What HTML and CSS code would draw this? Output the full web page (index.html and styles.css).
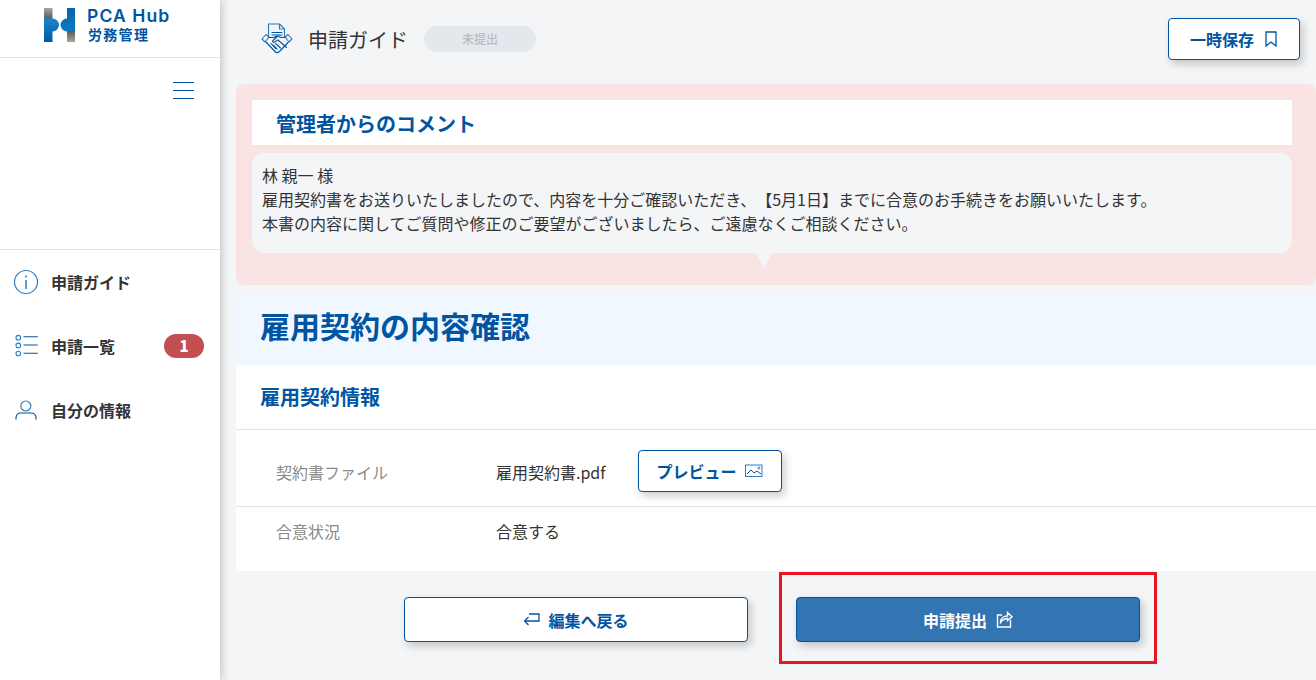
FILE: index.html
```html
<!DOCTYPE html>
<html lang="ja">
<head>
<meta charset="utf-8">
<title>申請ガイド</title>
<link rel="stylesheet" href="styles.css">
</head>
<body>
<div class="app">
  <aside class="sidebar">
    <div class="brand">
      <svg class="brand-mark" width="31" height="34" viewBox="0 0 31 34">
        <defs>
          <linearGradient id="g1" x1="0" y1="0" x2="0" y2="34" gradientUnits="userSpaceOnUse"><stop offset="0" stop-color="#aaa69e"/><stop offset=".3" stop-color="#5f5d58"/><stop offset=".31" stop-color="#1a86c4"/><stop offset="1" stop-color="#0058a6"/></linearGradient>
          <linearGradient id="g2" x1="0" y1="0" x2="0" y2="34" gradientUnits="userSpaceOnUse"><stop offset="0" stop-color="#0a62ad"/><stop offset=".68" stop-color="#0a7cc0"/><stop offset=".69" stop-color="#5f5d58"/><stop offset="1" stop-color="#aaa69e"/></linearGradient>
        </defs>
        <path d="M0 0h8.500v10.500a6.500 6.500 0 0 1 0 13V34H0z" fill="url(#g1)"/>
        <path d="M23 0h8v34h-8V23.500a6.500 6.500 0 0 1 0-13z" fill="url(#g2)"/>
      </svg>
      <div class="brand-text">
        <span class="brand-name">PCA Hub</span>
        <span class="brand-sub">労務管理</span>
      </div>
    </div>
    <div class="menu-row">
      <button class="burger" aria-label="メニュー"><i></i><i></i><i></i></button>
    </div>
    <nav class="nav">
      <a class="nav-item">
        <svg width="26" height="26" viewBox="0 0 26 26" fill="none" stroke="#2f7fc1" stroke-width="1.200"><circle cx="13" cy="13" r="11.500"/><path d="M13 11v9M13 6.500v2" stroke="#0055a2"/></svg>
        <span>申請ガイド</span>
      </a>
      <a class="nav-item">
        <svg width="26" height="26" viewBox="0 0 26 26" fill="none" stroke="#0055a2" stroke-width="1.100"><circle cx="5.300" cy="4.700" r="2.300" stroke="#2f7fc1"/><circle cx="5.300" cy="12.400" r="2.300" stroke="#2f7fc1"/><circle cx="5.300" cy="20.500" r="2.300" stroke="#2f7fc1"/><path d="M10.500 3.800h14.200M10.500 12h14.200M10.500 20.300h14.200"/></svg>
        <span>申請一覧</span>
        <b class="badge">1</b>
      </a>
      <a class="nav-item">
        <svg width="26" height="26" viewBox="0 0 26 26" fill="none" stroke="#2f7fc1" stroke-width="1.200"><circle cx="12.800" cy="9" r="5"/><path d="M3 22.500V21c0-3 2-5 5-5h10c3 0 5 2 5 5v1.500" stroke="#0055a2"/></svg>
        <span>自分の情報</span>
      </a>
    </nav>
  </aside>
  <main class="main">
    <header class="topbar">
      <svg class="guide-icon" width="32" height="32" viewBox="0 0 32 32" fill="none" stroke="#2a78bd" stroke-width="1.100" stroke-linejoin="round" stroke-linecap="round">
        <path d="M7.500 15V2h11l5 5v8"/><path d="M18.500 2v5h5"/>
        <path d="M11 10.500h10M11 13h10" stroke="#0055a2"/>
        <path d="M1 17l4-4.500 3 2.500-4 5zM31 17l-4-4.500-3 2.500 4 5z"/>
        <path d="M5 20l9 9.500c1.500 1.500 3.500 1 4.500 0l8.500-9" stroke="#0055a2"/>
        <path d="M8 15.500h5l3-1.500M24 15.500h-4l-3-1.500-5 4.500c-1 1 0 2.500 1.500 1.500l3.500-2 8.500 7.500M12 23l4 4M14.500 21.500l5 4.500M10 21.500l4.500 5" stroke="#0055a2"/>
      </svg>
      <h1 class="page-title">申請ガイド</h1>
      <span class="status">未提出</span>
      <button class="btn save">一時保存
        <svg class="save-icon" width="12" height="16" viewBox="0 0 12 16" fill="none" stroke="#0055a2" stroke-width="1.300"><path d="M1 1h10v14l-5-4-5 4z"/></svg>
      </button>
    </header>
    <section class="comment">
      <h2 class="comment-title">管理者からのコメント</h2>
      <div class="bubble">
        <p>林 親一 様</p>
        <p>雇用契約書をお送りいたしましたので、内容を十分ご確認いただき、【5月1日】までに合意のお手続きをお願いいたします。</p>
        <p>本書の内容に関してご質問や修正のご要望がございましたら、ご遠慮なくご相談ください。</p>
      </div>
    </section>
    <section class="heading"><h2>雇用契約の内容確認</h2></section>
    <section class="card">
      <h3 class="card-title">雇用契約情報</h3>
      <div class="row row-file">
        <div class="label">契約書ファイル</div>
        <div class="value">雇用契約書.pdf</div>
        <button class="btn preview">プレビュー
          <svg width="18" height="14" viewBox="0 0 18 14" fill="none" stroke="#2f7fc1" stroke-width="1"><rect x=".5" y="1" width="16.500" height="11.500"/><path d="M2 10l4-4 3 3 3-2 4 3" stroke="#0055a2"/><circle cx="14" cy="4" r="1"/></svg>
        </button>
      </div>
      <div class="row row-agree">
        <div class="label">合意状況</div>
        <div class="value">合意する</div>
      </div>
    </section>
    <div class="actions">
      <button class="btn back">
        <svg width="17" height="14" viewBox="0 0 17 14" fill="none" stroke="#0055a2" stroke-width="1.300"><path d="M6 1h10v7H1.500M5.500 4L1.500 8l4 4"/></svg>
        編集へ戻る
      </button>
      <div class="highlight">
        <button class="btn submit">申請提出
          <svg width="17" height="17" viewBox="0 0 17 17" fill="none" stroke="#fff" stroke-width="1.400"><path d="M6 4H1.500v12h13V9"/><path d="M4.500 11.500c0-4 3-6.500 7-6.500V1.500L16 5.800l-4.500 3.700V7.500c-3 0-5 1.300-7 4z"/></svg>
        </button>
      </div>
    </div>
  </main>
</div>
</body>
</html>
```
FILE: styles.css
```css
* { box-sizing: border-box; }
html, body { margin: 0; height: 680px; overflow: hidden; }
body {
  background: #f4f5f7;
  color: #333;
  font-family: "Noto Sans CJK JP", "Noto Sans", sans-serif;
  font-size: 16px;
  text-spacing-trim: space-all;
}
h1, h2, h3, p { margin: 0; font-weight: inherit; }
button { font-family: inherit; cursor: pointer; }

.app { display: flex; height: 680px; }

/* Sidebar */
.sidebar {
  width: 220px;
  flex: none;
  background: #fff;
  box-shadow: 2px 0 8px rgba(0, 0, 0, .2);
  position: relative;
}
.brand {
  height: 58px;
  border-bottom: 1px solid #e3e3e3;
  display: flex;
  padding: 8px 0 0 44px;
  gap: 12px;
}
.brand-text { display: flex; flex-direction: column; color: #0055a2; margin-top: -2px; }
.brand-name { font: 600 17.500px/20px "Inter", sans-serif; letter-spacing: 1.100px; }
.brand-sub { font-size: 14px; line-height: 16px; font-weight: 700; letter-spacing: 1.300px; padding-left: 1px; }
.menu-row {
  height: 192px;
  border-bottom: 1px solid #e3e3e3;
  display: flex;
  justify-content: flex-end;
  padding: 24px 26px 0 0;
}
.burger {
  width: 21px; height: 17px; padding: 0; border: 0; background: none;
  display: flex; flex-direction: column; justify-content: space-between;
}
.burger i { display: block; height: 1px; background: #0055a2; }
.nav-item {
  height: 64px;
  display: flex;
  align-items: center;
  gap: 12px;
  padding: 0 16px 0 13px;
  font-size: 16px;
  font-weight: 700;
  line-height: 22px;
  color: #333;
}
.badge {
  margin-left: auto;
  width: 40px; height: 24px;
  border-radius: 12px;
  background: #c44f52;
  color: #fff;
  font-size: 15px;
  line-height: 24px;
  text-align: center;
}

/* Main */
.main { flex: 1; min-width: 0; padding-left: 16px; }
.topbar {
  height: 84px;
  display: flex;
  align-items: flex-start;
  padding: 18px 16px 0 24px;
}
.guide-icon { margin-top: 4px; margin-left: 1px; }
.page-title { font-size: 20px; line-height: 44px; margin-left: 15px; color: #333; }
.status {
  width: 112px; height: 26px;
  margin: 8px 0 0 16px;
  border-radius: 13px;
  background: #e4e7ec;
  color: #bbb;
  font-size: 12px;
  font-weight: 500;
  line-height: 26px;
  text-align: center;
}
.btn {
  display: inline-flex;
  align-items: center;
  justify-content: center;
  border: 1px solid #0055a2;
  border-radius: 4px;
  background: #fff;
  color: #0055a2;
  font-size: 16px;
  font-weight: 700;
  box-shadow: 3px 4px 8px rgba(0, 0, 0, .2);
}
.save { margin-left: auto; width: 132px; height: 42px; gap: 11px; }
.save-icon { margin-right: 1px; }

.comment {
  height: 201px;
  background: #f9e4e3;
  border-radius: 8px;
  padding: 16px 24px 16px 16px;
}
.comment-title {
  height: 45px;
  background: #fff;
  color: #0055a2;
  font-size: 20px;
  font-weight: 700;
  line-height: 47px;
  padding-left: 24px;
  margin-bottom: 8px;
}
.bubble {
  position: relative;
  height: 100px;
  background: #f4f5f7;
  border-radius: 12px;
  padding: 10px 10px 0;
  line-height: 24px;
}
.bubble::after {
  content: "";
  position: absolute;
  left: 504px;
  bottom: -15px;
  border: 8px solid transparent;
  border-bottom-width: 0;
  border-top: 15px solid #f4f5f7;
}
.heading {
  margin-top: 8px;
  height: 72px;
  background: #f0f7fe;
  padding-left: 24px;
}
.heading h2 {
  color: #0055a2;
  font-size: 30px;
  font-weight: 700;
  line-height: 64px;
}
.card { background: #fff; height: 206px; }
.card-title {
  height: 65px;
  border-bottom: 1px solid #e3e3e3;
  color: #0055a2;
  font-size: 20px;
  font-weight: 700;
  line-height: 64px;
  padding-left: 24px;
}
.row { display: flex; align-items: center; padding-left: 40px; }
.row-file { height: 77px; border-bottom: 1px solid #e3e3e3; padding-top: 6px; }
.row-agree { height: 50px; padding-bottom: 2px; }
.label { width: 220px; color: #8a8a8a; font-size: 16px; }
.row-file .label, .row-file .value { margin-top: 2px; }
.value { font-size: 16px; color: #333; }
.preview { width: 144px; height: 42px; margin-left: 32px; gap: 8px; }

.actions { display: flex; padding-left: 168px; margin-top: 1px; }
.back { width: 344px; height: 45px; margin-top: 25px; gap: 8px; }
.highlight {
  width: 378px; height: 92px;
  margin-left: 31px;
  border: 3px solid #e8141f;
  padding: 22px 14px;
}
.submit {
  width: 344px; height: 45px;
  gap: 9px;
  background: #3374b3;
  color: #fff;
}
```
